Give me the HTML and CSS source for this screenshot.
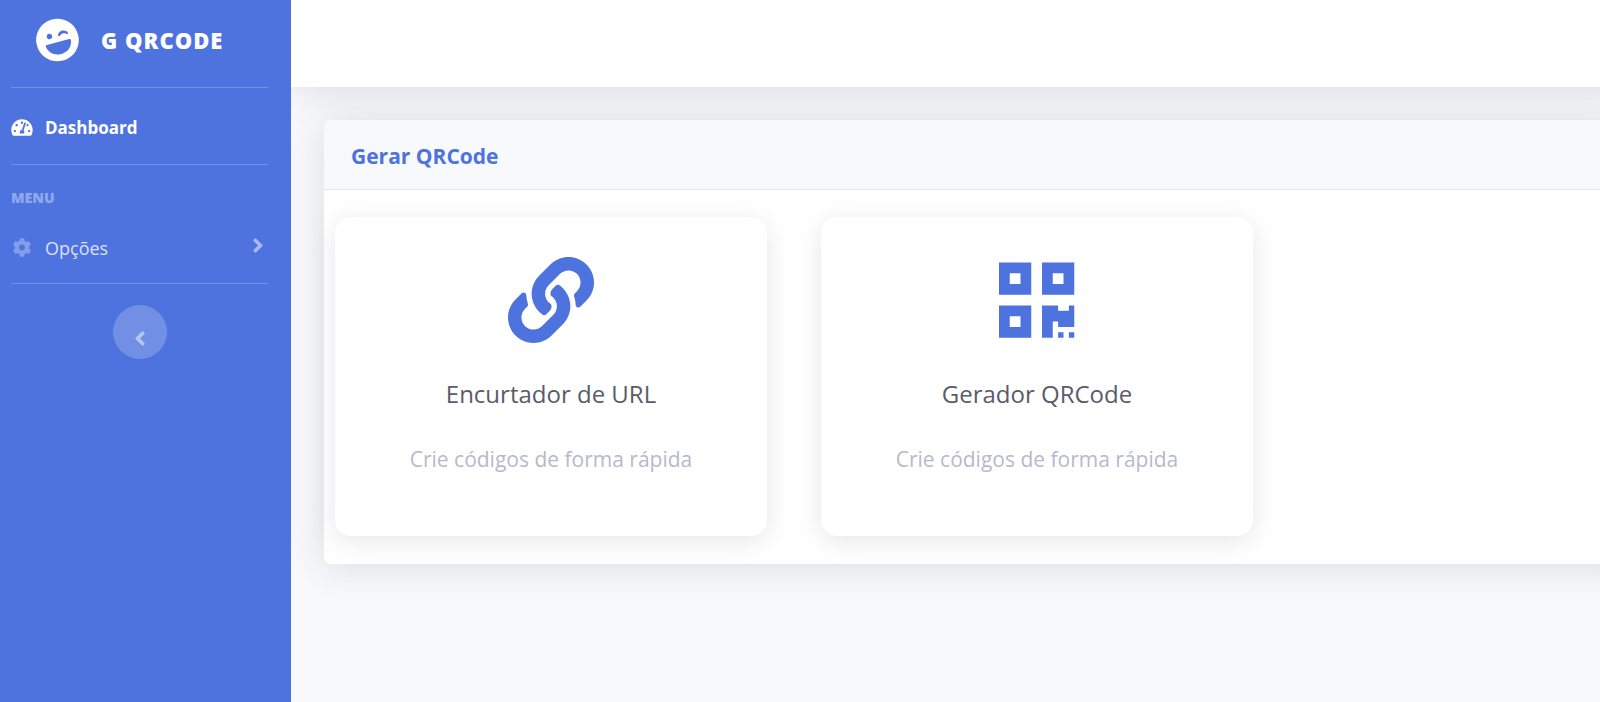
FILE: index.html
```html
<!DOCTYPE html>
<html lang="pt-br">
<head>
	<meta charset="UTF-8">
	<meta name="viewport" content="width=device-width, initial-scale=1.0">
	<title>G QRCode</title>
	<link rel="stylesheet" href="styles.css">
</head>
<body>
<div class="wrapper">

	<!-- Sidebar -->
	<nav class="sidebar">
		<a class="brand" href="#">
			<svg class="brand-icon" viewBox="0 0 496 512"><path d="M248 8C111 8 0 119 0 256s111 248 248 248 248-111 248-248S385 8 248 8zm20.1 198.1c4-25.2 34.2-42.1 59.9-42.1s55.9 16.9 59.9 42.1c1.7 11.1-11.4 18.3-19.8 10.8l-9.5-8.5c-14.8-13.2-46.2-13.2-61 0L288 217c-8.4 7.4-21.6.3-19.9-10.9zM168 160c17.7 0 32 14.3 32 32s-14.3 32-32 32-32-14.3-32-32 14.3-32 32-32zm230.9 137.9C390.3 367.6 331.6 424 259.5 424h-23c-72.1 0-130.8-56.4-139.4-126.1-1.2-9.3 6.3-17.9 16-17.9h269.8c9.7 0 17.1 8.6 16 17.9z"/></svg>
			<span class="brand-text">G QRCODE</span>
		</a>
		<hr class="divider">
		<a class="nav-link active" href="#">
			<svg class="nav-icon" viewBox="0 0 576 512"><path d="M288 32C128.94 32 0 160.94 0 320c0 52.8 14.25 102.26 39.06 144.8 5.61 9.62 16.3 15.2 27.44 15.2h443c11.14 0 21.83-5.58 27.44-15.2C561.75 422.26 576 372.8 576 320c0-159.06-128.94-288-288-288zm0 64c14.71 0 26.58 10.13 30.32 23.65-1.11 2.26-2.64 4.23-3.45 6.67l-9.22 27.67c-5.13 3.49-10.97 6.01-17.64 6.01-17.67 0-32-14.33-32-32S270.33 96 288 96zM96 384c-17.67 0-32-14.33-32-32s14.33-32 32-32 32 14.33 32 32-14.33 32-32 32zm48-160c-17.67 0-32-14.33-32-32s14.33-32 32-32 32 14.33 32 32-14.33 32-32 32zm246.77-72.41l-61.33 184C343.13 347.33 352 364.54 352 384c0 11.72-3.38 22.55-8.88 32H232.88c-5.5-9.45-8.88-20.28-8.88-32 0-33.94 26.5-61.43 59.9-63.59l61.34-184.01c4.17-12.56 17.73-19.45 30.36-15.17 12.57 4.19 19.35 17.79 15.17 30.36zm14.66 57.2l15.52-46.55c3.47-1.29 7.13-2.23 11.05-2.23 17.67 0 32 14.33 32 32s-14.33 32-32 32c-11.38-.01-20.89-6.28-26.57-15.22zM480 384c-17.67 0-32-14.33-32-32s14.33-32 32-32 32 14.33 32 32-14.33 32-32 32z"/></svg>
			<span>Dashboard</span>
		</a>
		<hr class="divider">
		<div class="sidebar-heading">MENU</div>
		<a class="nav-link" href="#">
			<svg class="nav-icon" viewBox="0 0 512 512"><path d="M487.4 315.7l-42.6-24.6c4.3-23.2 4.3-47 0-70.2l42.6-24.6c4.9-2.8 7.1-8.6 5.5-14-11.1-35.6-30-67.8-54.7-94.6-3.8-4.1-10-5.1-14.8-2.3L380.8 110c-17.9-15.4-38.5-27.3-60.8-35.1V25.8c0-5.6-3.9-10.5-9.4-11.7-36.7-8.2-74.3-7.8-109.2 0-5.5 1.2-9.4 6.1-9.4 11.7V75c-22.2 7.9-42.8 19.8-60.8 35.1L88.7 85.5c-4.9-2.8-11-1.9-14.8 2.3-24.7 26.7-43.6 58.9-54.7 94.6-1.7 5.4.6 11.2 5.5 14L67.3 221c-4.3 23.2-4.3 47 0 70.2l-42.6 24.6c-4.9 2.8-7.1 8.6-5.5 14 11.1 35.6 30 67.8 54.7 94.6 3.8 4.1 10 5.1 14.8 2.3l42.6-24.6c17.9 15.4 38.5 27.3 60.8 35.1v49.2c0 5.6 3.9 10.5 9.4 11.7 36.7 8.2 74.3 7.8 109.2 0 5.5-1.2 9.4-6.1 9.4-11.7v-49.2c22.2-7.9 42.8-19.8 60.8-35.1l42.6 24.6c4.9 2.8 11 1.9 14.8-2.3 24.7-26.7 43.6-58.9 54.7-94.6 1.5-5.5-.7-11.3-5.6-14.1zM256 336c-44.1 0-80-35.9-80-80s35.9-80 80-80 80 35.9 80 80-35.9 80-80 80z"/></svg>
			<span>Opções</span>
			<svg class="arrow" viewBox="0 0 256 512"><path d="M224.3 273l-136 136c-9.4 9.4-24.6 9.4-33.9 0l-22.6-22.6c-9.4-9.4-9.4-24.6 0-33.9l96.4-96.4-96.4-96.4c-9.4-9.4-9.4-24.6 0-33.9L54.3 103c9.4-9.4 24.6-9.4 33.9 0l136 136c9.5 9.4 9.5 24.6.1 34z"/></svg>
		</a>
		<hr class="divider">
		<button type="button" class="toggle" aria-label="Recolher menu">
			<svg viewBox="0 0 256 512"><path d="M31.7 239l136-136c9.4-9.4 24.6-9.4 33.9 0l22.6 22.6c9.4 9.4 9.4 24.6 0 33.9L127.9 256l96.4 96.4c9.4 9.4 9.4 24.6 0 33.9L201.7 409c-9.4 9.4-24.6 9.4-33.9 0l-136-136c-9.5-9.4-9.5-24.6-.1-34z"/></svg>
		</button>
	</nav>

	<!-- Content -->
	<div class="content">
		<header class="topbar"></header>
		<main class="main">
			<section class="panel">
				<div class="panel-header">
					<h1>Gerar QRCode</h1>
				</div>
				<div class="panel-body">
					<a class="card" href="#">
						<svg class="card-icon" viewBox="0 0 512 512"><path d="M326.612 185.391c59.747 59.809 58.927 155.698.36 214.59-.11.12-.24.25-.36.37l-67.2 67.2c-59.27 59.27-155.699 59.262-214.96 0-59.27-59.26-59.27-155.7 0-214.96l37.106-37.106c9.84-9.84 26.786-3.3 27.294 10.606.648 17.722 3.826 35.527 9.69 52.721 1.986 5.822.567 12.262-3.783 16.612l-13.087 13.087c-28.026 28.026-28.905 73.66-1.155 101.96 28.024 28.579 74.086 28.749 102.325.51l67.2-67.19c28.191-28.191 28.073-73.757 0-101.83-3.701-3.694-7.429-6.564-10.341-8.569a16.037 16.037 0 0 1-6.947-12.606c-.396-10.567 3.348-21.456 11.698-29.806l21.054-21.055c5.521-5.521 14.182-6.199 20.584-1.731a152.482 152.482 0 0 1 20.522 17.197zM467.547 44.449c-59.261-59.262-155.69-59.27-214.96 0l-67.2 67.2c-.12.12-.25.25-.36.37-58.566 58.892-59.387 154.781.36 214.59a152.454 152.454 0 0 0 20.521 17.196c6.402 4.468 15.064 3.789 20.584-1.731l21.054-21.055c8.35-8.35 12.094-19.239 11.698-29.806a16.037 16.037 0 0 0-6.947-12.606c-2.912-2.005-6.64-4.875-10.341-8.569-28.073-28.073-28.191-73.639 0-101.83l67.2-67.19c28.239-28.239 74.3-28.069 102.325.51 27.75 28.3 26.872 73.934-1.155 101.96l-13.087 13.087c-4.35 4.35-5.769 10.79-3.783 16.612 5.864 17.194 9.042 34.999 9.69 52.721.509 13.906 17.454 20.446 27.294 10.606l37.106-37.106c59.271-59.259 59.271-155.699.001-214.959z"/></svg>
						<h2>Encurtador de URL</h2>
						<p>Crie códigos de forma rápida</p>
					</a>
					<a class="card" href="#">
						<svg class="card-icon" viewBox="0 0 448 512"><path d="M0 224h192V32H0v192zM64 96h64v64H64V96zm192-64v192h192V32H256zm128 128h-64V96h64v64zM0 480h192V288H0v192zm64-128h64v64H64v-64zm352-64h32v128h-96v-32h-32v96h-64V288h96v32h64v-32zm0 160h32v32h-32v-32zm-64 0h32v32h-32v-32z"/></svg>
						<h2>Gerador QRCode</h2>
						<p>Crie códigos de forma rápida</p>
					</a>
				</div>
			</section>
		</main>
	</div>

</div>
</body>
</html>
```
FILE: styles.css
```css
* {
	box-sizing: border-box;
}
body {
	margin: 0;
	font-family: "Segoe UI", "Open Sans", "Noto Sans", sans-serif;
	color: #858796;
	background: #f8f9fc;
}
a {
	color: inherit;
	text-decoration: none;
}
svg {
	fill: currentColor;
}
.wrapper {
	display: flex;
	min-height: 100vh;
}

/* sidebar */
.sidebar {
	display: flex;
	flex-direction: column;
	flex: 0 0 291px;
	padding: 0 23px 0 11px;
	background: #4e73df;
	color: white;
}
.brand {
	display: flex;
	align-items: center;
	gap: 22px;
	height: 87px;
	padding: 0 0 7px 25px;
}
.brand-icon {
	width: 43px;
	height: 44px;
	transform: rotate(-15deg);
}
.brand-text {
	font-size: 22px;
	font-weight: 800;
	letter-spacing: 1px;
}
.divider {
	width: 100%;
	height: 1px;
	margin: 0;
	border: none;
	background: rgba(255, 255, 255, 0.2);
}
.nav-link {
	display: flex;
	align-items: center;
	height: 76px;
	padding-top: 3px;
	font-size: 18px;
	color: rgba(255, 255, 255, 0.8);
}
.nav-link.active {
	font-size: 17px;
	font-weight: 700;
	color: white;
}
.nav-icon {
	width: 22px;
	height: 19px;
	margin-right: 12px;
	fill: rgba(255, 255, 255, 0.3);
}
.active .nav-icon {
	fill: white;
}
.arrow {
	width: 12px;
	height: 23px;
	margin: 0 4px 4px auto;
	fill: rgba(255, 255, 255, 0.5);
}
.sidebar-heading {
	padding-top: 22px;
	font-size: 14px;
	line-height: 22px;
	font-weight: 800;
	color: rgba(255, 255, 255, 0.4);
}
.sidebar-heading + .nav-link {
	height: 74px;
}
.toggle {
	display: flex;
	align-items: center;
	justify-content: center;
	align-self: center;
	width: 54px;
	height: 54px;
	margin-top: 21px;
	padding: 12px 0 0;
	border: none;
	border-radius: 50%;
	background: rgba(255, 255, 255, 0.2);
	color: rgba(255, 255, 255, 0.5);
	cursor: pointer;
}
.toggle svg {
	width: 12px;
	height: 23px;
}
.toggle:hover {
	background: rgba(255, 255, 255, 0.25);
}

/* content */
.content {
	flex: 1;
	min-width: 0;
	overflow: hidden;
}
.topbar {
	height: 87px;
	margin-right: -33px;
	background: white;
	box-shadow: 0 3px 38px rgba(58, 59, 69, 0.15);
}
.main {
	padding: 33px 0 33px 33px;
}
.panel {
	margin-right: -33px;
	border-radius: 7px;
	background: white;
	box-shadow: 0 3px 38px rgba(58, 59, 69, 0.15);
}
.panel-header {
	padding: 22px 27px 19px;
	border-bottom: 1px solid #e3e6f0;
	border-radius: 7px 7px 0 0;
	background: #f8f9fc;
}
.panel-header h1 {
	margin: 0;
	font-size: 21px;
	line-height: 28px;
	font-weight: 700;
	color: #4e73df;
}
.panel-body {
	display: flex;
	flex-wrap: wrap;
	gap: 54px;
	padding: 27px 11px 28px;
}
.card {
	display: flex;
	flex-direction: column;
	align-items: center;
	width: 432px;
	padding: 40px 20px 62px;
	border-radius: 16px;
	background: white;
	box-shadow: 0 5px 27px rgba(0, 0, 0, 0.1);
}
.card-icon {
	height: 86px;
	color: #4e73df;
}
.card h2 {
	margin: 33px 0 32px;
	font-size: 24px;
	line-height: 36px;
	font-weight: 400;
	color: #5a5c69;
}
.card p {
	margin: 0;
	font-size: 21px;
	line-height: 30px;
	color: #b7b9cc;
}
```
